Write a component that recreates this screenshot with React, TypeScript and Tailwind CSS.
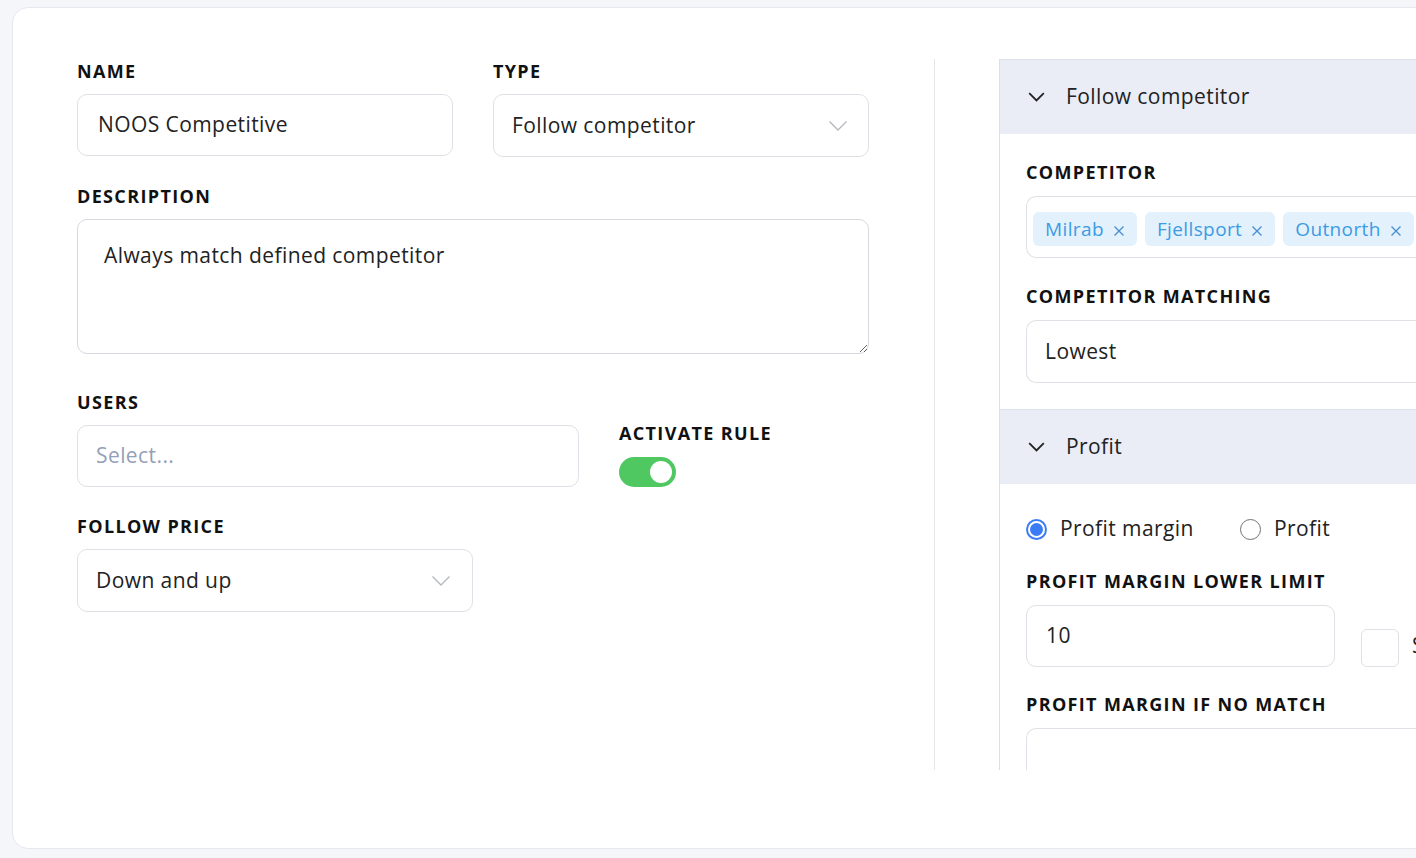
import React from "react";

const font = { fontFamily: '"Open Sans", "Noto Sans", sans-serif' };

function Label({ children, className = "" }: { children: React.ReactNode; className?: string }) {
  return (
    <div className={"text-[18px] font-bold tracking-[0.075em] leading-[20px] text-[#111111] uppercase whitespace-nowrap " + className}>
      {children}
    </div>
  );
}

function Chevron() {
  return (
    <svg width="20" height="12" viewBox="0 0 20 12" fill="none" className="shrink-0">
      <polyline points="1.5,1.5 10,10 18.5,1.5" stroke="#b5b8bf" strokeWidth="1.4" fill="none" />
    </svg>
  );
}

function HeaderChevron() {
  return (
    <svg width="17" height="10" viewBox="0 0 17 10" fill="none" className="shrink-0">
      <polyline points="1.2,1.2 8.5,8.5 15.8,1.2" stroke="#222222" strokeWidth="1.8" fill="none" />
    </svg>
  );
}

function XIcon() {
  return (
    <svg width="12" height="12" viewBox="0 0 12 12" className="shrink-0 mt-[4px]">
      <path d="M1.5 1.5 L10.5 10.5 M10.5 1.5 L1.5 10.5" stroke="#4a8fd0" strokeWidth="1.4" />
    </svg>
  );
}

function Tag({ text }: { text: string }) {
  return (
    <div className="flex items-center gap-[9px] h-[34px] px-[12px] rounded-[6px] bg-[#e3f1fd] text-[#3d9be3] text-[19px] tracking-[0.02em] leading-none">
      <span>{text}</span>
      <XIcon />
    </div>
  );
}

const val = "text-[21px] tracking-[0.02em]";

export default function App() {
  return (
    <div className="w-full h-[858px] overflow-hidden bg-[#f5f6fa] text-[#222222]" style={font}>
      <div className="ml-[12px] mt-[7px] w-[1500px] h-[842px] bg-white border border-[#e5e8f1] rounded-[16px] pl-[64px] pt-[51px]">
        <div className="flex">
          {/* Left column */}
          <div className="w-[792px] h-[711px] shrink-0">
            <div className="grid grid-cols-2 gap-x-[40px]">
              <div>
                <Label className="mt-[2px]">Name</Label>
                <div className={"mt-[13px] h-[62px] border border-[#dfe1e6] rounded-[10px] flex items-center px-[20px] " + val}>
                  NOOS Competitive
                </div>
              </div>
              <div>
                <Label className="mt-[2px]">Type</Label>
                <div className={"mt-[13px] h-[63px] border border-[#dfe1e6] rounded-[10px] flex items-center justify-between pl-[18px] pr-[20px] " + val}>
                  <span>Follow competitor</span>
                  <Chevron />
                </div>
              </div>
            </div>

            <Label className="mt-[29px]">Description</Label>
            <textarea
              defaultValue="Always match defined competitor"
              className="mt-[13px] block w-full h-[135px] border border-[#d6d8dd] rounded-[10px] pl-[26px] pt-[21px] text-[21px] tracking-[0.02em] leading-[28px] text-[#222222] outline-none resize-y"
              style={font}
            />

            <div className="flex items-end gap-[40px] mt-[38px]">
              <div className="w-[502px] shrink-0">
                <Label>Users</Label>
                <div className={"mt-[13px] h-[62px] border border-[#dfe1e6] rounded-[10px] flex items-center px-[18px] text-[#94a0b8] " + val}>
                  Select...
                </div>
              </div>
              <div>
                <Label>Activate rule</Label>
                <div className="mt-[14px] w-[57px] h-[30px] rounded-full bg-[#4fc862] relative">
                  <div className="absolute right-[4px] top-[4px] w-[22px] h-[22px] rounded-full bg-white" />
                </div>
              </div>
            </div>

            <Label className="mt-[29px]">Follow price</Label>
            <div className={"mt-[13px] w-[396px] h-[63px] border border-[#dfe1e6] rounded-[10px] flex items-center justify-between pl-[18px] pr-[21px] " + val}>
              <span>Down and up</span>
              <Chevron />
            </div>
          </div>

          {/* Divider */}
          <div className="ml-[65px] w-px h-[711px] bg-[#e4e6ea] shrink-0" />

          {/* Right panel */}
          <div className="ml-[64px] w-[520px] h-[711px] shrink-0 overflow-hidden border-l border-[#dcdfe6]">
            <div className={"h-[75px] bg-[#eaedf6] border-t border-[#dde1ec] flex items-center pl-[28px] gap-[21px] " + val}>
              <HeaderChevron />
              <span>Follow competitor</span>
            </div>
            <div className="pl-[26px] pt-[28px] pb-[26px]">
              <Label>Competitor</Label>
              <div className="mt-[14px] h-[62px] border border-[#dfe1e6] border-r-0 rounded-l-[10px] flex items-center pl-[6px] pt-[4px] gap-[8px]">
                <Tag text="Milrab" />
                <Tag text="Fjellsport" />
                <Tag text="Outnorth" />
              </div>
              <Label className="mt-[28px]">Competitor matching</Label>
              <div className={"mt-[14px] h-[63px] border border-[#dfe1e6] border-r-0 rounded-l-[10px] flex items-center pl-[18px] " + val}>
                Lowest
              </div>
            </div>
            <div className={"h-[75px] bg-[#eaedf6] border-t border-[#dde1ec] flex items-center pl-[28px] gap-[21px] " + val}>
              <HeaderChevron />
              <span>Profit</span>
            </div>
            <div className="pl-[26px] pt-[31px]">
              <div className={"flex items-center h-[28px] " + val}>
                <div className="flex items-center w-[214px] shrink-0">
                  <div className="w-[21px] h-[21px] rounded-full border-[2px] border-[#3b7cf5] flex items-center justify-center">
                    <div className="w-[13px] h-[13px] rounded-full bg-[#3b7cf5]" />
                  </div>
                  <span className="ml-[13px]">Profit margin</span>
                </div>
                <div className="w-[21px] h-[21px] rounded-full border-[1.5px] border-[#6f7177]" />
                <span className="ml-[13px]">Profit</span>
              </div>
              <Label className="mt-[28px]">Profit margin lower limit</Label>
              <div className="mt-[14px] flex items-end">
                <div className={"w-[309px] h-[62px] border border-[#dfe1e6] rounded-[10px] flex items-center px-[19px] shrink-0 " + val}>
                  10
                </div>
                <div className="ml-[26px] w-[38px] h-[38px] border border-[#dfe1e6] rounded-[6px] shrink-0" />
                <span className="ml-[13px] mb-[6px] text-[21px] whitespace-nowrap">Set as fixed</span>
              </div>
              <Label className="mt-[27px]">Profit margin if no match</Label>
              <div className="mt-[14px] h-[62px] border border-[#dfe1e6] border-r-0 rounded-l-[10px]" />
            </div>
          </div>
        </div>
      </div>
    </div>
  );
}
